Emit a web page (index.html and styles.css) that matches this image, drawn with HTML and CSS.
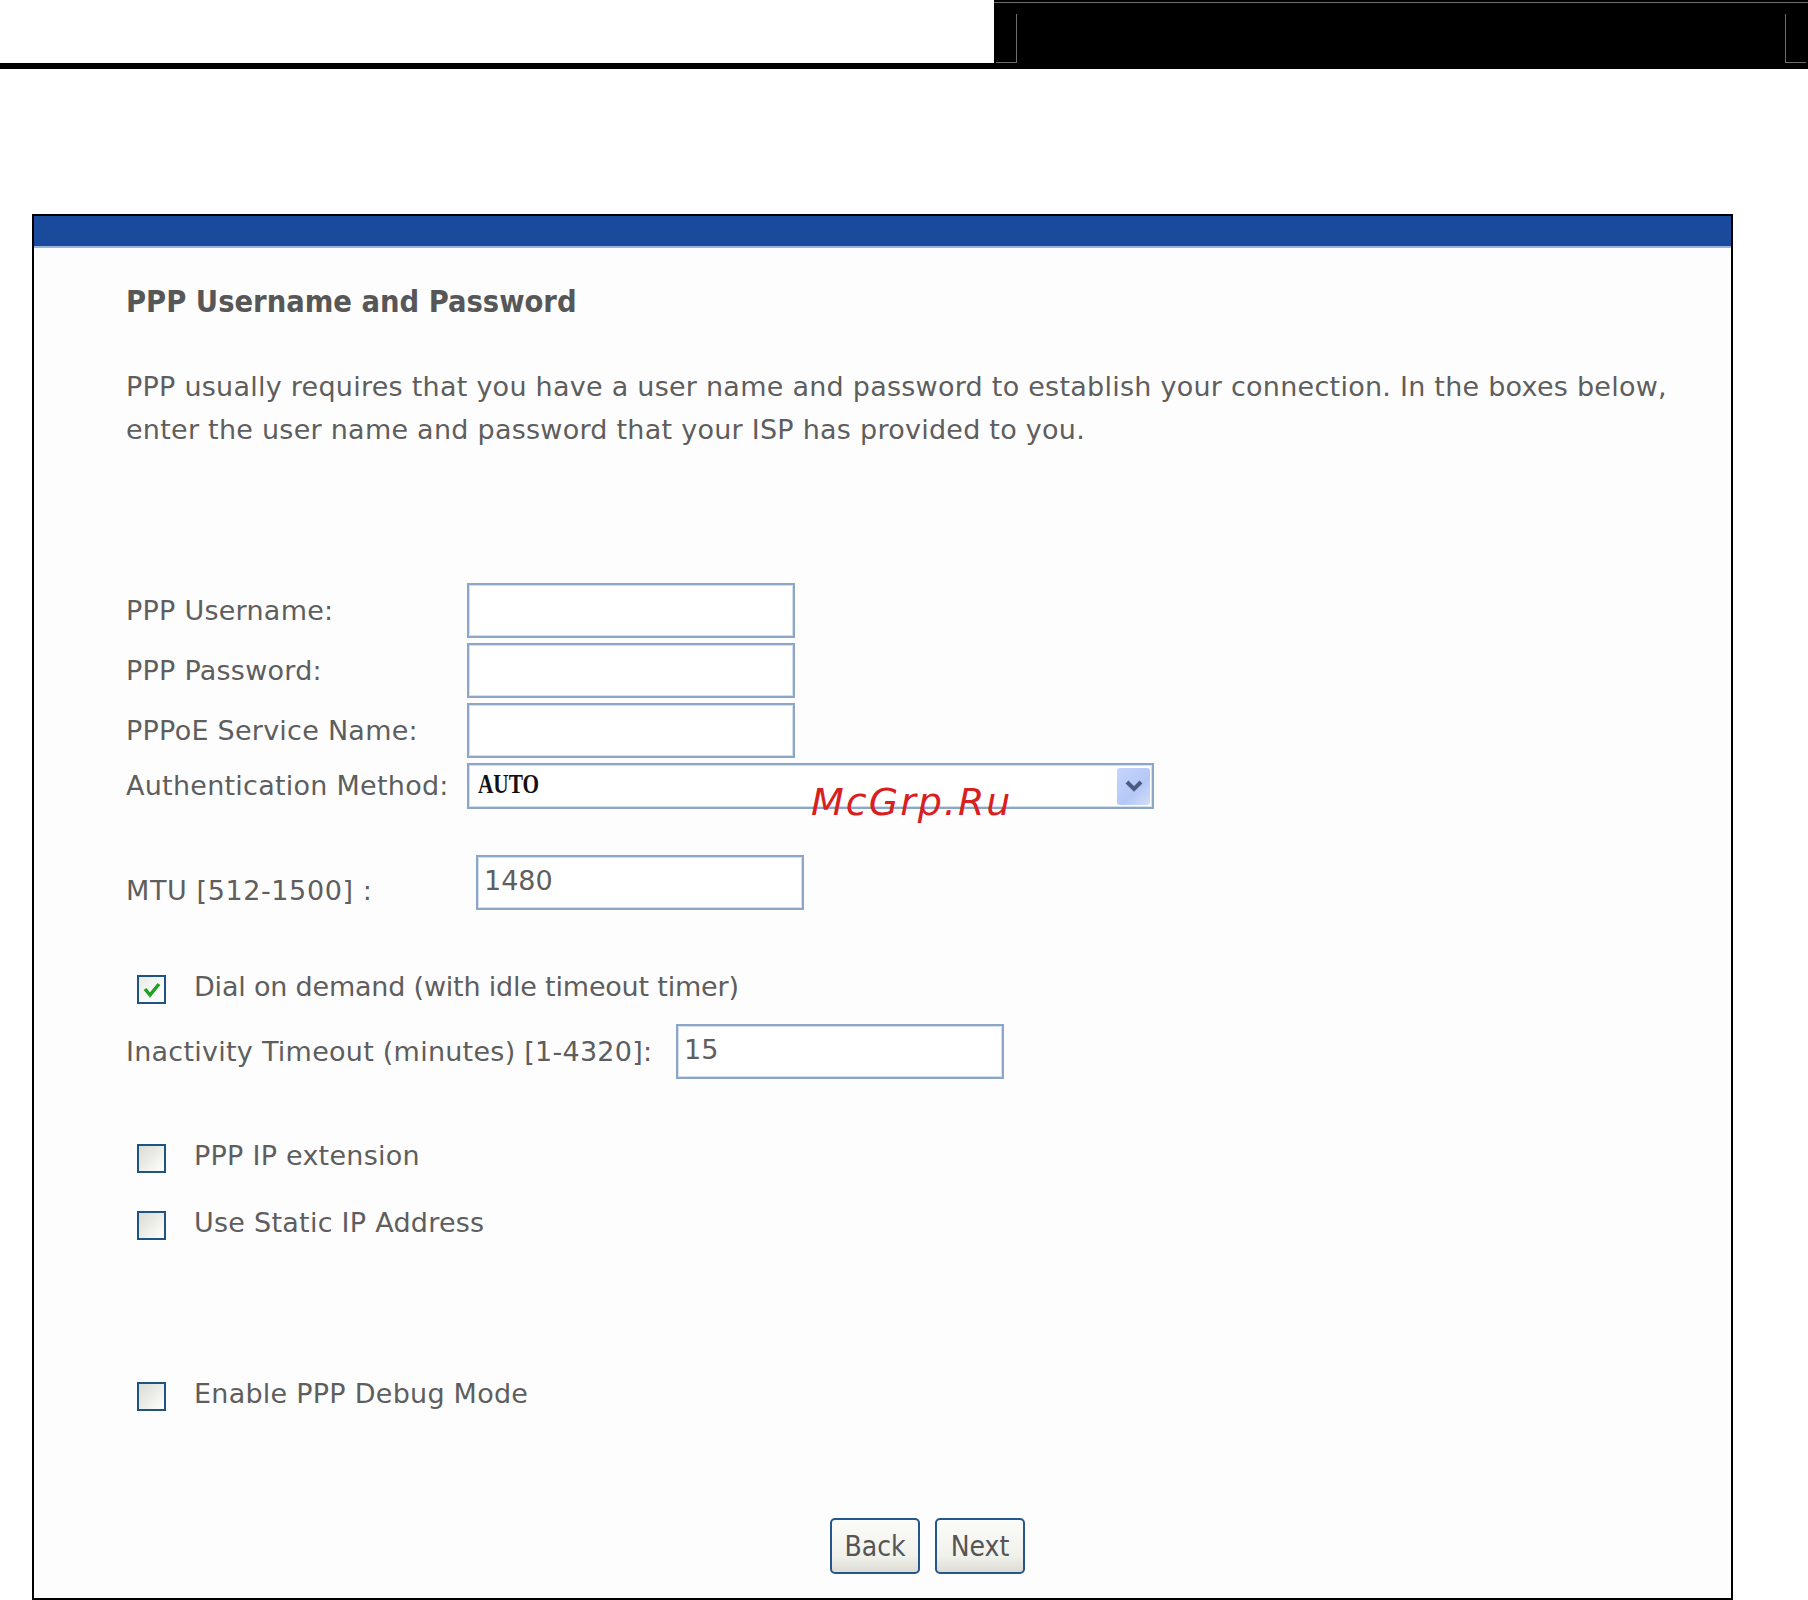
FILE: index.html
```html
<!DOCTYPE html>
<html lang="en">
<head>
<meta charset="utf-8">
<title>PPP Username and Password</title>
<link rel="stylesheet" href="styles.css">
</head>
<body>
<div class="header">
  <div class="hdr-left"></div>
  <div class="hdr-right"></div>
</div>

<div class="panel">
  <div class="panel-bar"></div>
  <div class="panel-body">
    <h1 class="title">PPP Username and Password</h1>
    <p class="intro">PPP usually requires that you have a user name and password to establish your connection. In the boxes below,<br>enter the user name and password that your ISP has provided to you.</p>

    <div class="form-grid">
      <label class="lbl">PPP Username:</label>
      <div class="field"></div>
      <label class="lbl">PPP Password:</label>
      <div class="field"></div>
      <label class="lbl">PPPoE Service Name:</label>
      <div class="field"></div>
      <label class="lbl">Authentication Method:</label>
      <div class="select">
        <span class="select-val">AUTO</span>
        <span class="select-btn">
          <svg width="20" height="14" viewBox="0 0 20 14"><path d="M3 3 L10 10 L17 3" fill="none" stroke="#4a5d80" stroke-width="4"/></svg>
        </span>
        <span class="watermark">McGrp.Ru</span>
      </div>
    </div>

    <div class="mtu-row">
      <span class="lbl mtu-lbl">MTU [512-1500] :</span>
      <div class="field"><span class="val">1480</span></div>
    </div>

    <div class="check-row dial-row">
      <span class="cbox checked">
        <svg width="20" height="18" viewBox="0 0 20 18"><path d="M3 8 L8 14 L17 3" fill="none" stroke="#22a022" stroke-width="3.5"/></svg>
      </span>
      <span class="cbox-lbl dial-lbl">Dial on demand (with idle timeout timer)</span>
    </div>

    <div class="timeout-row">
      <span class="lbl">Inactivity Timeout (minutes) [1-4320]:</span>
      <div class="field"><span class="val">15</span></div>
    </div>

    <div class="check-row ipext-row">
      <span class="cbox"></span>
      <span class="cbox-lbl">PPP IP extension</span>
    </div>

    <div class="check-row static-row">
      <span class="cbox"></span>
      <span class="cbox-lbl">Use Static IP Address</span>
    </div>

    <div class="check-row debug-row">
      <span class="cbox"></span>
      <span class="cbox-lbl">Enable PPP Debug Mode</span>
    </div>

    <div class="buttons">
      <button class="btn">Back</button>
      <button class="btn">Next</button>
    </div>
  </div>
</div>
</body>
</html>
```

FILE: styles.css
```css
html, body {
  margin: 0;
  padding: 0;
  background: #ffffff;
}

body {
  width: 1808px;
  height: 1600px;
  overflow: hidden;
  font-family: "DejaVu Sans", sans-serif;
  color: #5e5e5e;
}

/* header strip */
.header {
  display: flex;
  height: 69px;
}

.hdr-left {
  width: 994px;
  border-bottom: 6px solid #000;
  box-sizing: border-box;
}

.hdr-right {
  flex: 1;
  position: relative;
  background: linear-gradient(180deg, #000 0, #000 2px, #6e6e6e 2px, #6e6e6e 3px, #000 3px, #000 100%);
}

.hdr-right::before,
.hdr-right::after {
  content: "";
  position: absolute;
  top: 14px;
  height: 48px;
  width: 20px;
  border-bottom: 1px solid #6e6e6e;
}

.hdr-right::before {
  left: 2px;
  border-right: 1px solid #6e6e6e;
}

.hdr-right::after {
  right: 2px;
  border-left: 1px solid #6e6e6e;
}

/* panel */
.panel {
  margin: 145px 0 0 32px;
  width: 1701px;
  height: 1386px;
  box-sizing: border-box;
  border: 2px solid #000;
  background: #fdfdfd;
}

.panel-bar {
  height: 30px;
  background: #1a4a9b;
  border-bottom: 2px solid #9db3db;
}

.panel-body {
  padding: 34px 0 0 92px;
}

.title {
  margin: 0;
  font-family: "DejaVu Sans Condensed", "DejaVu Sans", sans-serif;
  font-stretch: condensed;
  font-size: 30.5px;
  line-height: 40px;
  font-weight: bold;
  color: #575757;
}

.intro {
  margin: 43px 0 0 0;
  font-size: 27px;
  line-height: 43px;
  letter-spacing: 0.25px;
  white-space: nowrap;
}

/* form grid */
.form-grid {
  margin-top: 132px;
  display: grid;
  grid-template-columns: 341px auto;
  row-gap: 5px;
  align-items: center;
  justify-items: start;
}

.lbl {
  font-size: 27px;
  line-height: 32px;
  letter-spacing: 0.25px;
  white-space: nowrap;
}

.field {
  width: 328px;
  height: 55px;
  box-sizing: border-box;
  border: 2px solid #8ba6c6;
  box-shadow: inset 0 0 0 1px #d6e0ec;
  background: #fff;
  display: flex;
  align-items: center;
  padding-left: 6px;
}

.val {
  font-size: 27px;
  color: #5e5e5e;
  margin-top: -4px;
}

.select {
  position: relative;
  width: 687px;
  height: 46px;
  box-sizing: border-box;
  border: 2px solid #8ba6c6;
  box-shadow: inset 0 0 0 1px #d6e0ec;
  background: #fff;
  display: flex;
  align-items: center;
  justify-content: space-between;
  padding: 0 2px 0 9px;
}

.select-val {
  font-family: "Liberation Serif", "DejaVu Serif", serif;
  font-weight: bold;
  font-size: 28px;
  color: #111;
  margin-top: -4px;
  width: 62px;
  display: inline-block;
  transform: scaleX(0.76);
  transform-origin: left center;
}

.select-btn {
  width: 33px;
  height: 37px;
  border-radius: 3px;
  background: linear-gradient(135deg, #c6d5fb 0%, #b4c8f7 60%, #d3def9 100%);
  display: flex;
  align-items: center;
  justify-content: center;
}

.watermark {
  position: absolute;
  left: 342px;
  top: 15px;
  font-family: "DejaVu Sans", sans-serif;
  font-style: italic;
  font-size: 38px;
  letter-spacing: 2px;
  color: #d7201f;
  white-space: nowrap;
}

/* mtu row */
.mtu-row {
  margin-top: 46px;
  display: flex;
  align-items: center;
}

.mtu-lbl {
  width: 350px;
  margin-top: 16px;
  letter-spacing: 0.6px;
}

/* checkbox rows */
.check-row {
  display: flex;
  align-items: center;
  height: 29px;
  padding-left: 11px;
}

.dial-row { margin-top: 65px; }
.ipext-row { margin-top: 65px; }
.static-row { margin-top: 38px; }
.debug-row { margin-top: 142px; }

.cbox {
  width: 29px;
  height: 29px;
  box-sizing: border-box;
  border: 2px solid #1e5482;
  background: linear-gradient(135deg, #dcdcd5 0%, #f0f0ec 60%, #ffffff 100%);
  display: flex;
  align-items: center;
  justify-content: center;
  flex: none;
}

.cbox.checked {
  background: linear-gradient(135deg, #e8e8e4 0%, #fafafa 60%, #ffffff 100%);
}

.cbox-lbl {
  margin-left: 28px;
  margin-top: -5px;
  font-size: 27px;
  line-height: 32px;
  letter-spacing: 0.25px;
  white-space: nowrap;
}

.dial-lbl {
  letter-spacing: -0.2px;
}

/* timeout row */
.timeout-row {
  margin-top: 20px;
  display: flex;
  align-items: center;
}

.timeout-row .lbl {
  width: 550px;
}

/* buttons */
.buttons {
  margin-top: 107px;
  padding-left: 704px;
  display: flex;
  gap: 15px;
}

.btn {
  width: 90px;
  height: 56px;
  box-sizing: border-box;
  border: 2px solid #24578d;
  border-radius: 5px;
  background: linear-gradient(180deg, #fbfbf8 0%, #f1f1ec 70%, #dcdcd4 100%);
  font-family: "DejaVu Sans Condensed", "DejaVu Sans", sans-serif;
  font-stretch: condensed;
  font-size: 28px;
  color: #555;
  padding: 0;
}
```
